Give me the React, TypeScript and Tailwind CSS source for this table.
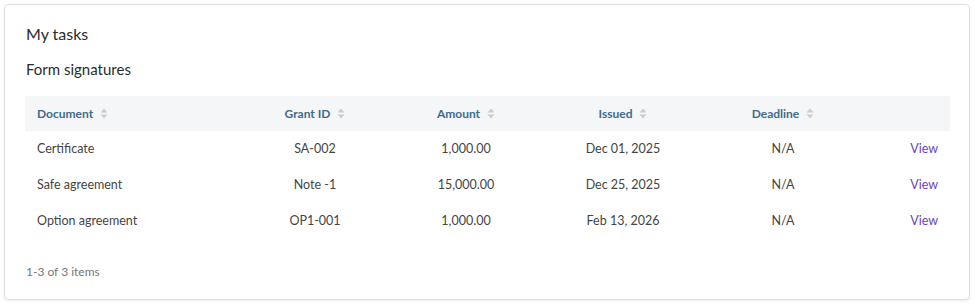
const rows = [
  { doc: "Certificate", grant: "SA-002", amount: "1,000.00", issued: "Dec 01, 2025", deadline: "N/A" },
  { doc: "Safe agreement", grant: "Note -1", amount: "15,000.00", issued: "Dec 25, 2025", deadline: "N/A" },
  { doc: "Option agreement", grant: "OP1-001", amount: "1,000.00", issued: "Feb 13, 2026", deadline: "N/A" },
];

function SortIcon() {
  return (
    <svg width="8" height="11" viewBox="0 0 8 11" className="ml-[7px] shrink-0">
      <path d="M4 0.5 L7.5 4.5 L0.5 4.5 Z" fill="#c9ccd1" />
      <path d="M4 10.5 L7.5 6.5 L0.5 6.5 Z" fill="#c9ccd1" />
    </svg>
  );
}

export default function App() {
  return (
    <div className="w-[975px] h-[304px] bg-white p-[4px] pr-[5px] font-['Lato',sans-serif]">
      <div className="h-[296px] rounded-[4px] border border-[#dedede] bg-white shadow-[0_1px_3px_rgba(0,0,0,0.08)] px-[20px] pt-[17px]">
        <h1 className="pl-[1px] text-[16px] leading-[24px] text-[#2b2b2b]">My tasks</h1>
        <h2 className="pl-[1px] mt-[13px] text-[15px] leading-[20px] text-[#2b2b2b]">Form signatures</h2>

        <table className="mt-[17px] w-[925px] table-fixed border-collapse text-[12.5px]">
          <colgroup>
            <col className="w-[215px]" />
            <col className="w-[150px]" />
            <col className="w-[152px]" />
            <col className="w-[162px]" />
            <col className="w-[158px]" />
            <col className="w-[88px]" />
          </colgroup>
          <thead>
            <tr className="h-[35px] bg-[#f5f6f7] text-[12px] text-[#3f6b8c] font-bold">
              <th className="px-[12px] text-left">
                <span className="inline-flex items-center">Document<SortIcon /></span>
              </th>
              {["Grant ID", "Amount", "Issued", "Deadline"].map((h) => (
                <th key={h} className="text-center">
                  <span className="inline-flex items-center">{h}<SortIcon /></span>
                </th>
              ))}
              <th />
            </tr>
          </thead>
          <tbody className="text-[#444]">
            {rows.map((r) => (
              <tr key={r.doc} className="h-[36px]">
                <td className="px-[12px] text-left">{r.doc}</td>
                <td className="text-center">{r.grant}</td>
                <td className="text-center">{r.amount}</td>
                <td className="text-center">{r.issued}</td>
                <td className="text-center">{r.deadline}</td>
                <td className="px-[12px] text-right text-[#6a3fc7]">View</td>
              </tr>
            ))}
          </tbody>
        </table>

        <div className="pl-[1px] mt-[25px] text-[12px] leading-[16px] text-[#777]">1-3 of 3 items</div>
      </div>
    </div>
  );
}
